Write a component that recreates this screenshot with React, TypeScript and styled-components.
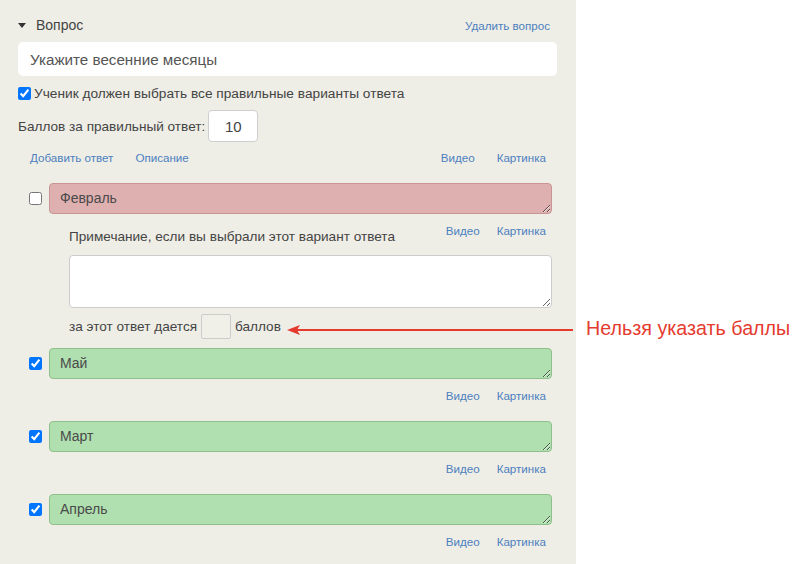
import React from "react";
import styled, { createGlobalStyle } from "styled-components";

const Global = createGlobalStyle`
  html, body { margin: 0; padding: 0; background: #ffffff; }
  body { font-family: "Liberation Sans", Arial, sans-serif; }
  * { box-sizing: border-box; }
`;

const Page = styled.div`
  position: relative;
  width: 801px;
  height: 564px;
  overflow: hidden;
  display: flex;
`;

const Panel = styled.div`
  width: 576px;
  height: 564px;
  overflow: hidden;
  background: #efeee6;
  padding: 16px 19px 0 18px;
  display: flex;
  flex-direction: column;
  & > * {
    flex-shrink: 0;
  }
`;

const Header = styled.div`
  height: 18px;
  display: flex;
  align-items: center;
  justify-content: space-between;
  padding-right: 7px;
`;

const Title = styled.div`
  display: flex;
  align-items: center;
  gap: 10px;
  font-size: 14px;
  color: #444;
`;

const Caret = styled.span`
  width: 0;
  height: 0;
  border-left: 4px solid transparent;
  border-right: 4px solid transparent;
  border-top: 5px solid #333;
`;

const Link = styled.a<{ $gap?: number }>`
  font-size: 11.6px;
  color: #4c7fbf;
  text-decoration: none;
  cursor: pointer;
  margin-left: ${(p) => p.$gap ?? 0}px;
`;

const QuestionInput = styled.div`
  margin-top: 8px;
  height: 34px;
  background: #fff;
  border-radius: 5px;
  padding: 0 12px;
  display: flex;
  align-items: center;
  font-size: 15.2px;
  color: #555;
`;

const CheckRow = styled.label`
  margin-top: 8px;
  height: 18px;
  display: flex;
  align-items: center;
  gap: 3px;
  font-size: 13.7px;
  color: #444;
`;

const Box = styled.input`
  width: 13px;
  height: 13px;
  margin: 0;
  flex: none;
`;

const ScoreRow = styled.div`
  margin-top: 8px;
  height: 32px;
  display: flex;
  align-items: center;
  gap: 3px;
  font-size: 13.6px;
  color: #444;
`;

const ScoreBox = styled.div`
  width: 50px;
  height: 32px;
  background: #fff;
  border: 1px solid #cfcfcf;
  border-radius: 4px;
  display: flex;
  align-items: center;
  justify-content: center;
  font-size: 15px;
  color: #444;
`;

const ToolRow = styled.div`
  margin-top: 7px;
  height: 16px;
  display: flex;
  align-items: center;
  padding: 0 11px 0 12px;
`;

const Spacer = styled.div`
  flex: 1;
`;

const Answers = styled.div`
  margin-top: 18px;
  display: flex;
  flex-direction: column;
  padding: 0 5px 0 11px;
  & > * {
    flex-shrink: 0;
  }
`;

const AnswerBlock = styled.div<{ $tight?: boolean }>`
  display: flex;
  flex-direction: column;
  margin-bottom: ${(p) => (p.$tight ? 9 : 18)}px;
`;

const AnswerRow = styled.div`
  display: flex;
  align-items: center;
  gap: 7px;
`;

const AnswerText = styled.textarea<{ $ok: boolean }>`
  flex: 1;
  height: 31px;
  min-height: 31px;
  resize: vertical;
  border-radius: 4px;
  border: 1px solid ${(p) => (p.$ok ? "#8fc08c" : "#c99494")};
  background: ${(p) => (p.$ok ? "#b0dfb0" : "#deb0b0")};
  padding: 6px 10px;
  font-family: "Liberation Sans", Arial, sans-serif;
  font-size: 14px;
  line-height: 17px;
  color: #4a4a4a;
  outline: none;
  overflow: hidden;
`;

const MediaRow = styled.div`
  display: flex;
  justify-content: flex-end;
  align-items: center;
  height: 16px;
  margin-top: 8px;
  padding-right: 6px;
`;

const NoteSection = styled.div`
  display: flex;
  flex-direction: column;
  padding-left: 40px;
`;

const NoteHead = styled.div`
  display: flex;
  align-items: flex-start;
  justify-content: space-between;
  margin-top: 8px;
  padding-right: 6px;
`;

const NoteLabel = styled.div`
  font-size: 13.6px;
  line-height: 16px;
  color: #444;
  margin-top: 7px;
`;

const NoteLinks = styled.div`
  display: flex;
  height: 16px;
  align-items: center;
`;

const NoteArea = styled.textarea`
  margin-top: 10px;
  height: 53px;
  width: 100%;
  background: #fff;
  border: 1px solid #cccccc;
  border-radius: 4px;
  resize: vertical;
  outline: none;
`;

const PointsRow = styled.div`
  display: flex;
  align-items: center;
  gap: 4px;
  margin-top: 6px;
  height: 25px;
  font-size: 13.6px;
  color: #444;
`;

const PointsBox = styled.div`
  width: 30px;
  height: 25px;
  background: #f0efe8;
  border: 1px solid #cccccc;
  border-radius: 2px;
`;

const Annotation = styled.div`
  position: absolute;
  left: 286px;
  top: 317px;
  display: flex;
  align-items: center;
  gap: 12px;
`;

const AnnotationText = styled.span`
  font-family: "Liberation Sans", Arial, sans-serif;
  font-size: 19.7px;
  color: #e53b2f;
  white-space: nowrap;
`;

type Answer = { text: string; ok: boolean; note?: boolean };

const answers: Answer[] = [
  { text: "Февраль", ok: false, note: true },
  { text: "Май", ok: true },
  { text: "Март", ok: true },
  { text: "Апрель", ok: true },
];

export default function App() {
  return (
    <>
      <Global />
      <Page>
        <Panel>
          <Header>
            <Title>
              <Caret />
              Вопрос
            </Title>
            <Link>Удалить вопрос</Link>
          </Header>
          <QuestionInput>Укажите весенние месяцы</QuestionInput>
          <CheckRow>
            <Box type="checkbox" defaultChecked />
            Ученик должен выбрать все правильные варианты ответа
          </CheckRow>
          <ScoreRow>
            Баллов за правильный ответ:
            <ScoreBox>10</ScoreBox>
          </ScoreRow>
          <ToolRow>
            <Link>Добавить ответ</Link>
            <Link $gap={22}>Описание</Link>
            <Spacer />
            <Link>Видео</Link>
            <Link $gap={22}>Картинка</Link>
          </ToolRow>
          <Answers>
            {answers.map((a) => (
              <AnswerBlock key={a.text} $tight={a.note}>
                <AnswerRow>
                  <Box type="checkbox" defaultChecked={a.ok} />
                  <AnswerText $ok={a.ok} defaultValue={a.text} readOnly />
                </AnswerRow>
                {a.note ? (
                  <NoteSection>
                    <NoteHead>
                      <NoteLabel>Примечание, если вы выбрали этот вариант ответа</NoteLabel>
                      <NoteLinks>
                        <Link>Видео</Link>
                        <Link $gap={17}>Картинка</Link>
                      </NoteLinks>
                    </NoteHead>
                    <NoteArea readOnly />
                    <PointsRow>
                      за этот ответ дается
                      <PointsBox />
                      баллов
                    </PointsRow>
                  </NoteSection>
                ) : (
                  <MediaRow>
                    <Link>Видео</Link>
                    <Link $gap={17}>Картинка</Link>
                  </MediaRow>
                )}
              </AnswerBlock>
            ))}
          </Answers>
        </Panel>
        <Annotation>
          <svg width="288" height="20" viewBox="0 0 288 20">
            <line x1="10" y1="11" x2="287" y2="11" stroke="#e53b2f" strokeWidth="2" />
            <polygon points="1,11 14,6 11,11 14,16" fill="#e53b2f" />
          </svg>
          <AnnotationText>Нельзя указать баллы</AnnotationText>
        </Annotation>
      </Page>
    </>
  );
}
